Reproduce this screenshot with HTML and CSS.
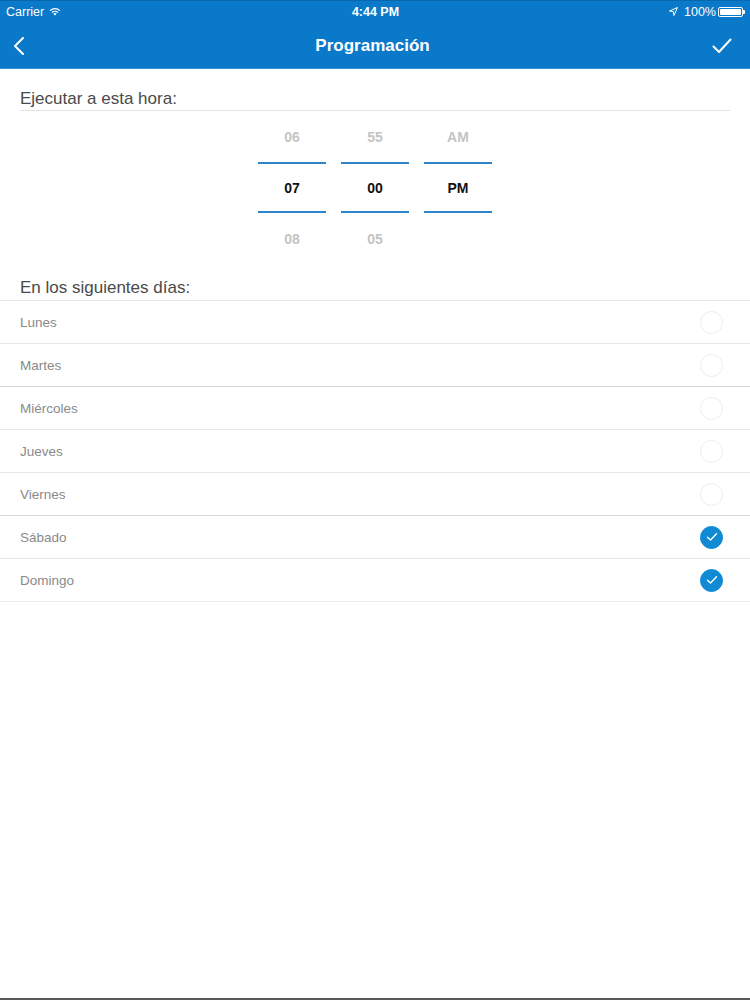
FILE: index.html
```html
<!DOCTYPE html>
<html lang="es">
<head>
<meta charset="utf-8">
<title>Programación</title>
<link rel="stylesheet" href="styles.css">
</head>
<body>
<div class="screen">
  <header class="topbar">
    <div class="status">
      <div class="status-left">
        <span>Carrier</span>
        <svg class="wifi" width="12" height="9" viewBox="0 0 12 9"><path d="M6 8.6 L4.3 6.8 A2.5 2.5 0 0 1 7.7 6.8 Z" fill="#fff"/><path d="M2.6 5.1 A4.9 4.9 0 0 1 9.4 5.1 L8.5 6 A3.6 3.6 0 0 0 3.5 6 Z" fill="#fff"/><path d="M0.7 3.2 A7.6 7.6 0 0 1 11.3 3.2 L10.4 4.1 A6.3 6.3 0 0 0 1.6 4.1 Z" fill="#fff"/></svg>
      </div>
      <div class="status-time">4:44 PM</div>
      <div class="status-right">
        <svg class="loc" width="9" height="9" viewBox="0 0 9 9"><path d="M8.5 0.5 L0.5 4 L4.3 4.6 L4.9 8.5 Z" fill="none" stroke="#fff" stroke-width="1" stroke-linejoin="round"/></svg>
        <span>100%</span>
        <span class="battery"><span class="battery-fill"></span></span><span class="battery-nub"></span>
      </div>
    </div>
    <nav class="navbar">
      <svg class="nav-back" width="12" height="18" viewBox="0 0 12 18"><path d="M10 1 L2 9 L10 17" fill="none" stroke="#fff" stroke-width="2" stroke-linecap="round" stroke-linejoin="round"/></svg>
      <h1 class="nav-title">Programación</h1>
      <svg class="nav-done" width="20" height="16" viewBox="0 0 20 16"><path d="M1.5 8.5 L7 14 L18.5 1.5" fill="none" stroke="#fff" stroke-width="2" stroke-linecap="round" stroke-linejoin="round"/></svg>
    </nav>
  </header>

  <main class="content">
    <section class="time-section">
      <h2 class="section-title underlined">Ejecutar a esta hora:</h2>
      <div class="picker">
        <div class="picker-col">
          <div class="picker-item faded">06</div>
          <div class="picker-item selected">07</div>
          <div class="picker-item faded">08</div>
        </div>
        <div class="picker-col">
          <div class="picker-item faded">55</div>
          <div class="picker-item selected">00</div>
          <div class="picker-item faded">05</div>
        </div>
        <div class="picker-col">
          <div class="picker-item faded">AM</div>
          <div class="picker-item selected">PM</div>
          <div class="picker-item faded"></div>
        </div>
      </div>
    </section>

    <section class="days-section">
      <h2 class="section-title">En los siguientes días:</h2>
      <ul class="day-list">
        <li class="day-row"><span class="day-name">Lunes</span><span class="check"></span></li>
        <li class="day-row"><span class="day-name">Martes</span><span class="check"></span></li>
        <li class="day-row strong-top"><span class="day-name">Miércoles</span><span class="check"></span></li>
        <li class="day-row"><span class="day-name">Jueves</span><span class="check"></span></li>
        <li class="day-row"><span class="day-name">Viernes</span><span class="check"></span></li>
        <li class="day-row strong-top"><span class="day-name">Sábado</span><span class="check on"><svg width="12" height="10" viewBox="0 0 12 10"><path d="M1.5 5.2 L4.5 8 L10.5 1.8" fill="none" stroke="#fff" stroke-width="1.4" stroke-linecap="round" stroke-linejoin="round"/></svg></span></li>
        <li class="day-row"><span class="day-name">Domingo</span><span class="check on"><svg width="12" height="10" viewBox="0 0 12 10"><path d="M1.5 5.2 L4.5 8 L10.5 1.8" fill="none" stroke="#fff" stroke-width="1.4" stroke-linecap="round" stroke-linejoin="round"/></svg></span></li>
      </ul>
    </section>
  </main>
  <div class="bottom-edge"></div>
</div>
</body>
</html>
```

FILE: styles.css
```css
* { box-sizing: border-box; }
html, body { margin: 0; padding: 0; }
body {
  background: #fff;
  font-family: "Liberation Sans", Arial, sans-serif;
  width: 750px;
  height: 1000px;
  overflow: hidden;
}
.screen {
  width: 750px;
  height: 1000px;
  display: flex;
  flex-direction: column;
}
.topbar {
  background: #0a79c9;
  color: #fff;
  border-top: 1px solid #0867ad;
  border-bottom: 1px solid #3b93d4;
}
.status {
  height: 21px;
  display: grid;
  grid-template-columns: 1fr auto 1fr;
  align-items: center;
  font-size: 12.5px;
  padding: 0 5px 0 6px;
}
.status-left { display: flex; align-items: center; gap: 5px; }
.status-time { font-weight: bold; font-size: 12.5px; }
.status-right { display: flex; align-items: center; justify-content: flex-end; gap: 0; }
.status-right .loc { margin-right: 6px; }
.status-right span:nth-child(2) { margin-right: 2px; }
.battery {
  width: 25px; height: 10px;
  border: 1px solid #fff;
  border-radius: 2px;
  padding: 1px;
  display: inline-flex;
}
.battery-fill { flex: 1; background: #fff; border-radius: 1px; }
.battery-nub { width: 2px; height: 4px; background: #fff; border-radius: 0 1px 1px 0; }
.navbar {
  height: 46px;
  display: grid;
  grid-template-columns: 1fr auto 1fr;
  align-items: center;
  padding: 2px 18px 0 13px;
}
.nav-done { justify-self: end; }
.nav-title {
  margin: 0;
  font-size: 17px;
  font-weight: bold;
  font-family: "Liberation Sans", Arial, sans-serif;
}
.content { flex: 1; }
.time-section { padding: 20px 20px 0; }
.section-title {
  margin: 0;
  font-size: 17px;
  font-weight: normal;
  color: #4a4a4a;
  line-height: 20px;
}
.underlined { padding-bottom: 1px; border-bottom: 1px solid #e3e3e3; }
.picker {
  display: flex;
  justify-content: center;
  gap: 15px;
}
.picker-col {
  width: 68px;
  display: flex;
  flex-direction: column;
}
.picker-item {
  height: 51px;
  display: flex;
  align-items: center;
  justify-content: center;
  font-size: 14px;
  font-weight: bold;
}
.picker-item.faded { color: #c4c4c4; }
.picker-item.selected {
  color: #111;
  border-top: 2px solid #2d84c8;
  border-bottom: 2px solid #2d84c8;
}
.days-section { padding-top: 14px; }
.days-section .section-title { padding: 0 20px 2px; }
.day-list {
  list-style: none;
  margin: 0;
  padding: 0;
  border-bottom: 1px solid #ececec;
}
.day-row {
  height: 43px;
  display: flex;
  align-items: center;
  justify-content: space-between;
  padding: 0 27px 0 20px;
  border-top: 1px solid #e6e6e6;
}
.day-row.strong-top { border-top-color: #d6d6d6; }
.day-name { font-size: 13.5px; color: #8a8a8a; }
.check {
  width: 23px; height: 23px;
  border-radius: 50%;
  border: 1px solid #ededed;
  display: flex;
  align-items: center;
  justify-content: center;
}
.check.on { background: #0f8ad3; border-color: #0f8ad3; }
.bottom-edge { height: 2px; background: #5a5a5a; }
```
